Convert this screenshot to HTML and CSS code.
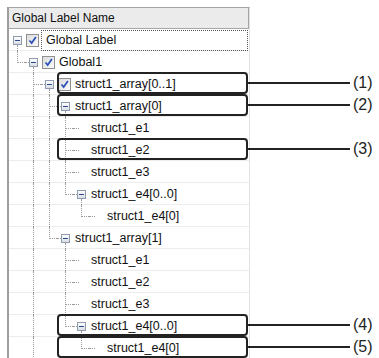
FILE: index.html
```html
<!DOCTYPE html>
<html lang="en">
<head>
    <meta charset="UTF-8">
    <title>Global Label Tree</title>
    <link rel="stylesheet" href="styles.css">
</head>
<body>
    <div class="panel">
        <div class="head">Global Label Name</div>

        <ul class="tree">
            <!-- Global Label -->
            <li class="row">
                <span class="node open"><i class="exp"></i></span>
                <span class="check"><svg viewBox="0 0 13 13"><path d="M3 6.5 L5.5 9.5 L10.5 2.5"/></svg></span>
                <span class="label focus">Global Label</span>
            </li>
            <li class="row">
                <i class="g elbow"></i>
                <span class="node sub open"><i class="exp"></i></span>
                <span class="check"><svg viewBox="0 0 13 13"><path d="M3 6.5 L5.5 9.5 L10.5 2.5"/></svg></span>
                <span class="label">Global1</span>
            </li>

            <!-- struct1_array[0..1] -->
            <li class="row">
                <i class="g"></i><i class="g tee"></i>
                <span class="node sub open"><i class="exp"></i></span>
                <span class="check"><svg viewBox="0 0 13 13"><path d="M3 6.5 L5.5 9.5 L10.5 2.5"/></svg></span>
                <span class="label">struct1_array[0..1]</span>
                <span class="mark"><span class="tag">(1)</span></span>
            </li>
            <li class="row">
                <i class="g"></i><i class="g pipe"></i><i class="g tee"></i>
                <span class="node sub open"><i class="exp"></i></span>
                <span class="label">struct1_array[0]</span>
                <span class="mark"><span class="tag">(2)</span></span>
            </li>
            <li class="row">
                <i class="g"></i><i class="g pipe"></i><i class="g pipe"></i><i class="g tee"></i>
                <span class="node leaf"></span>
                <span class="label">struct1_e1</span>
            </li>
            <li class="row">
                <i class="g"></i><i class="g pipe"></i><i class="g pipe"></i><i class="g tee"></i>
                <span class="node leaf"></span>
                <span class="label">struct1_e2</span>
                <span class="mark"><span class="tag">(3)</span></span>
            </li>
            <li class="row">
                <i class="g"></i><i class="g pipe"></i><i class="g pipe"></i><i class="g tee"></i>
                <span class="node leaf"></span>
                <span class="label">struct1_e3</span>
            </li>
            <li class="row">
                <i class="g"></i><i class="g pipe"></i><i class="g pipe"></i><i class="g elbow"></i>
                <span class="node sub open"><i class="exp"></i></span>
                <span class="label">struct1_e4[0..0]</span>
            </li>
            <li class="row">
                <i class="g"></i><i class="g pipe"></i><i class="g pipe"></i><i class="g"></i><i class="g elbow"></i>
                <span class="node leaf"></span>
                <span class="label">struct1_e4[0]</span>
            </li>

            <!-- struct1_array[1] -->
            <li class="row">
                <i class="g"></i><i class="g pipe"></i><i class="g elbow"></i>
                <span class="node sub open"><i class="exp"></i></span>
                <span class="label">struct1_array[1]</span>
            </li>
            <li class="row">
                <i class="g"></i><i class="g pipe"></i><i class="g"></i><i class="g tee"></i>
                <span class="node leaf"></span>
                <span class="label">struct1_e1</span>
            </li>
            <li class="row">
                <i class="g"></i><i class="g pipe"></i><i class="g"></i><i class="g tee"></i>
                <span class="node leaf"></span>
                <span class="label">struct1_e2</span>
            </li>
            <li class="row">
                <i class="g"></i><i class="g pipe"></i><i class="g"></i><i class="g tee"></i>
                <span class="node leaf"></span>
                <span class="label">struct1_e3</span>
            </li>
            <li class="row">
                <i class="g"></i><i class="g pipe"></i><i class="g"></i><i class="g elbow"></i>
                <span class="node sub open"><i class="exp"></i></span>
                <span class="label">struct1_e4[0..0]</span>
                <span class="mark"><span class="tag">(4)</span></span>
            </li>
            <li class="row">
                <i class="g"></i><i class="g pipe"></i><i class="g"></i><i class="g"></i><i class="g elbow"></i>
                <span class="node leaf"></span>
                <span class="label">struct1_e4[0]</span>
                <span class="mark"><span class="tag">(5)</span></span>
            </li>
        </ul>
    </div>
</body>
</html>
```

FILE: styles.css
```css
/* Reset */
* {
    margin: 0;
    padding: 0;
    box-sizing: border-box;
}
body {
    background: #fff;
    font-family: 'Liberation Sans', Arial, sans-serif;
    color: #111;
    overflow: hidden;
}

/* Panel */
.panel {
    margin: 7px 0 0 7px;
    width: 243px;
    height: 360px;
    border-top: 1px solid #a5a5a5;
    border-left: 2px solid #9e9e9e;
    border-right: 1px solid #e2e2e2;
}

.head {
    height: 21px;
    line-height: 20px;
    padding-left: 3px;
    font-size: 12px;
    background: #ebebeb;
    border-bottom: 1px solid #a5a5a5;
    border-right: 1px solid #a5a5a5;
}

/* Tree rows */
.tree {
    list-style: none;
}
.row {
    position: relative;
    display: flex;
    height: 22px;
    font-size: 12.5px;
    line-height: 22px;
    background: linear-gradient(to top, #ececec 1px, transparent 1px);
}

/* Guide cells */
.g, .node {
    position: relative;
    flex: none;
    width: 16px;
    height: 22px;
}
.pipe::before, .tee::before, .elbow::before {
    content: "";
    position: absolute;
    left: 8px;
    top: 0;
    height: 22px;
    border-left: 1px dotted #9a9a9a;
}
.elbow::before {
    height: 12px;
}
.tee::after, .elbow::after {
    content: "";
    position: absolute;
    left: 9px;
    right: 0;
    top: 11px;
    border-top: 1px dotted #9a9a9a;
}

.sub::before, .leaf::before {
    content: "";
    position: absolute;
    left: 0;
    width: 8px;
    top: 11px;
    border-top: 1px dotted #9a9a9a;
}
.leaf::before {
    width: 6px;
}
.open::after {
    content: "";
    position: absolute;
    left: 8px;
    top: 16px;
    bottom: 0;
    border-left: 1px dotted #9a9a9a;
}

/* Expander */
.exp {
    position: absolute;
    left: 4px;
    top: 7px;
    width: 9px;
    height: 9px;
    border: 1px solid #8f9cb0;
    background: linear-gradient(#ffffff, #d9dde4);
    z-index: 1;
}
.exp::before {
    content: "";
    position: absolute;
    left: 1px;
    top: 3px;
    width: 5px;
    height: 1px;
    background: #2d4a8a;
}

/* Checkbox */
.check {
    flex: none;
    width: 13px;
    height: 13px;
    margin: 5px 0 0 1px;
    border: 1px solid #8e9092;
    background: linear-gradient(135deg, #dcdcdc, #fafafa);
}
.check svg {
    display: block;
    width: 11px;
    height: 11px;
}
.check path {
    fill: none;
    stroke: #2a4fb8;
    stroke-width: 2;
}

/* Labels */
.label {
    padding-left: 2px;
    white-space: nowrap;
}
.check + .label {
    padding-left: 4px;
}
.focus {
    flex: 1;
    height: 21px;
    margin: 1px 1px 0 2px;
    padding-left: 2px;
    line-height: 19px;
    border: 1px dotted #555;
}

/* Callouts */
.mark {
    position: absolute;
    left: 48px;
    right: 1px;
    top: -1px;
    bottom: 1px;
    border: 2px solid #222;
    border-radius: 4px;
}
.tag {
    position: absolute;
    left: 100%;
    top: 50%;
    transform: translateY(-50%);
    display: flex;
    align-items: center;
    gap: 3px;
    font-size: 16px;
    line-height: 16px;
    color: #222;
}
.tag::before {
    content: "";
    width: 104px;
    height: 2px;
    background: #222;
}
```
